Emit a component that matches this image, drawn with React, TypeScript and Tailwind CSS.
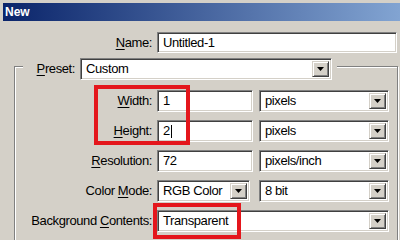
import React from "react";

const sunken =
  "border border-t-[#808080] border-l-[#808080] border-b-white border-r-white shadow-[inset_1px_1px_0_#404040,inset_-1px_-1px_0_#d4d0c8] bg-white";

function Key({ children }: { children: React.ReactNode }) {
  return <span className="underline underline-offset-[2px]">{children}</span>;
}

function TextBox({ value, width, caret }: { value: string; width: string; caret?: boolean }) {
  return (
    <div className={`${sunken} ${width} h-[22px] flex items-center pl-[5px]`}>
      <span>{value}</span>
      {caret && <span className="inline-block w-px h-[13px] bg-black ml-[1px]" />}
    </div>
  );
}

function Select({ value, width }: { value: string; width: string }) {
  return (
    <div className={`${sunken} ${width} h-[22px] flex items-stretch p-[2px]`}>
      <span className="flex-1 flex items-center pl-[3px]">{value}</span>
      <div className="w-[17px] bg-[#d4d0c8] border border-t-[#d4d0c8] border-l-[#d4d0c8] border-b-[#404040] border-r-[#404040] shadow-[inset_1px_1px_0_#fff,inset_-1px_-1px_0_#808080] flex items-center justify-center">
        <svg width="7" height="4" viewBox="0 0 7 4">
          <polygon points="0,0 7,0 3.5,4" fill="#000" />
        </svg>
      </div>
    </div>
  );
}

function Row({ label, children }: { label: React.ReactNode; children: React.ReactNode }) {
  return (
    <div className="flex items-center h-[22px]">
      <div className="w-[129px] text-right">{label}</div>
      <div className="ml-[5px] flex items-center">{children}</div>
    </div>
  );
}

export default function App() {
  return (
    <div
      className="relative w-[400px] h-[240px] overflow-hidden bg-[#d4d0c8] pl-[3px] pt-[3px] text-[13px] tracking-[-0.4px] text-black"
      style={{ fontFamily: '"Liberation Sans", Arial, sans-serif' }}
    >
      {/* TITLE BAR */}
      <div className="h-[18px] bg-[linear-gradient(to_right,#0a246a,#82a4d2)] flex items-center pl-[2px]">
        <span className="text-white font-bold text-[12px] tracking-normal">New</span>
      </div>

      <div className="mr-[3px]">
        {/* NAME */}
        <div className="flex items-center mt-[11px] h-[21px]">
          <div className="w-[149px] text-right">
            <Key>N</Key>ame:
          </div>
          <div className={`${sunken} ml-[5px] flex-1 h-[21px] flex items-center pl-[5px]`}>Untitled-1</div>
        </div>

        {/* PRESET GROUP */}
        <fieldset className="ml-[11px] px-[8px] pb-[20px] border border-[#808080] shadow-[inset_1px_1px_0_#fff,1px_1px_0_#fff]">
          <legend className="pt-[5px] bg-[#d4d0c8]">
            <div className="flex items-center pr-[5px]">
              <div className="w-[52px] text-right">
                <Key>P</Key>reset:
              </div>
              <div className="ml-[5px]">
                <Select value="Custom" width="w-[252px]" />
              </div>
            </div>
          </legend>

          <div className="mt-[10px] flex flex-col gap-[8px]">
            <Row label={<><Key>W</Key>idth:</>}>
              <TextBox value="1" width="w-[96px]" />
              <div className="ml-[6px]">
                <Select value="pixels" width="w-[130px]" />
              </div>
            </Row>
            <Row label={<><Key>H</Key>eight:</>}>
              <TextBox value="2" width="w-[96px]" caret />
              <div className="ml-[6px]">
                <Select value="pixels" width="w-[130px]" />
              </div>
            </Row>
            <Row label={<><Key>R</Key>esolution:</>}>
              <TextBox value="72" width="w-[96px]" />
              <div className="ml-[6px]">
                <Select value="pixels/inch" width="w-[130px]" />
              </div>
            </Row>
            <Row label={<>Color <Key>M</Key>ode:</>}>
              <Select value="RGB Color" width="w-[93px]" />
              <div className="ml-[9px]">
                <Select value="8 bit" width="w-[130px]" />
              </div>
            </Row>
            <Row label={<>Background <Key>C</Key>ontents:</>}>
              <Select value="Transparent" width="w-[232px]" />
            </Row>
          </div>
        </fieldset>
      </div>

      {/* RED HIGHLIGHTS */}
      <div className="absolute left-[94px] top-[85px] w-[96px] h-[60px] border-[4px] border-[#e4161c]" />
      <div className="absolute left-[153px] top-[203px] w-[88px] h-[36px] border-[4px] border-[#e4161c]" />
    </div>
  );
}
